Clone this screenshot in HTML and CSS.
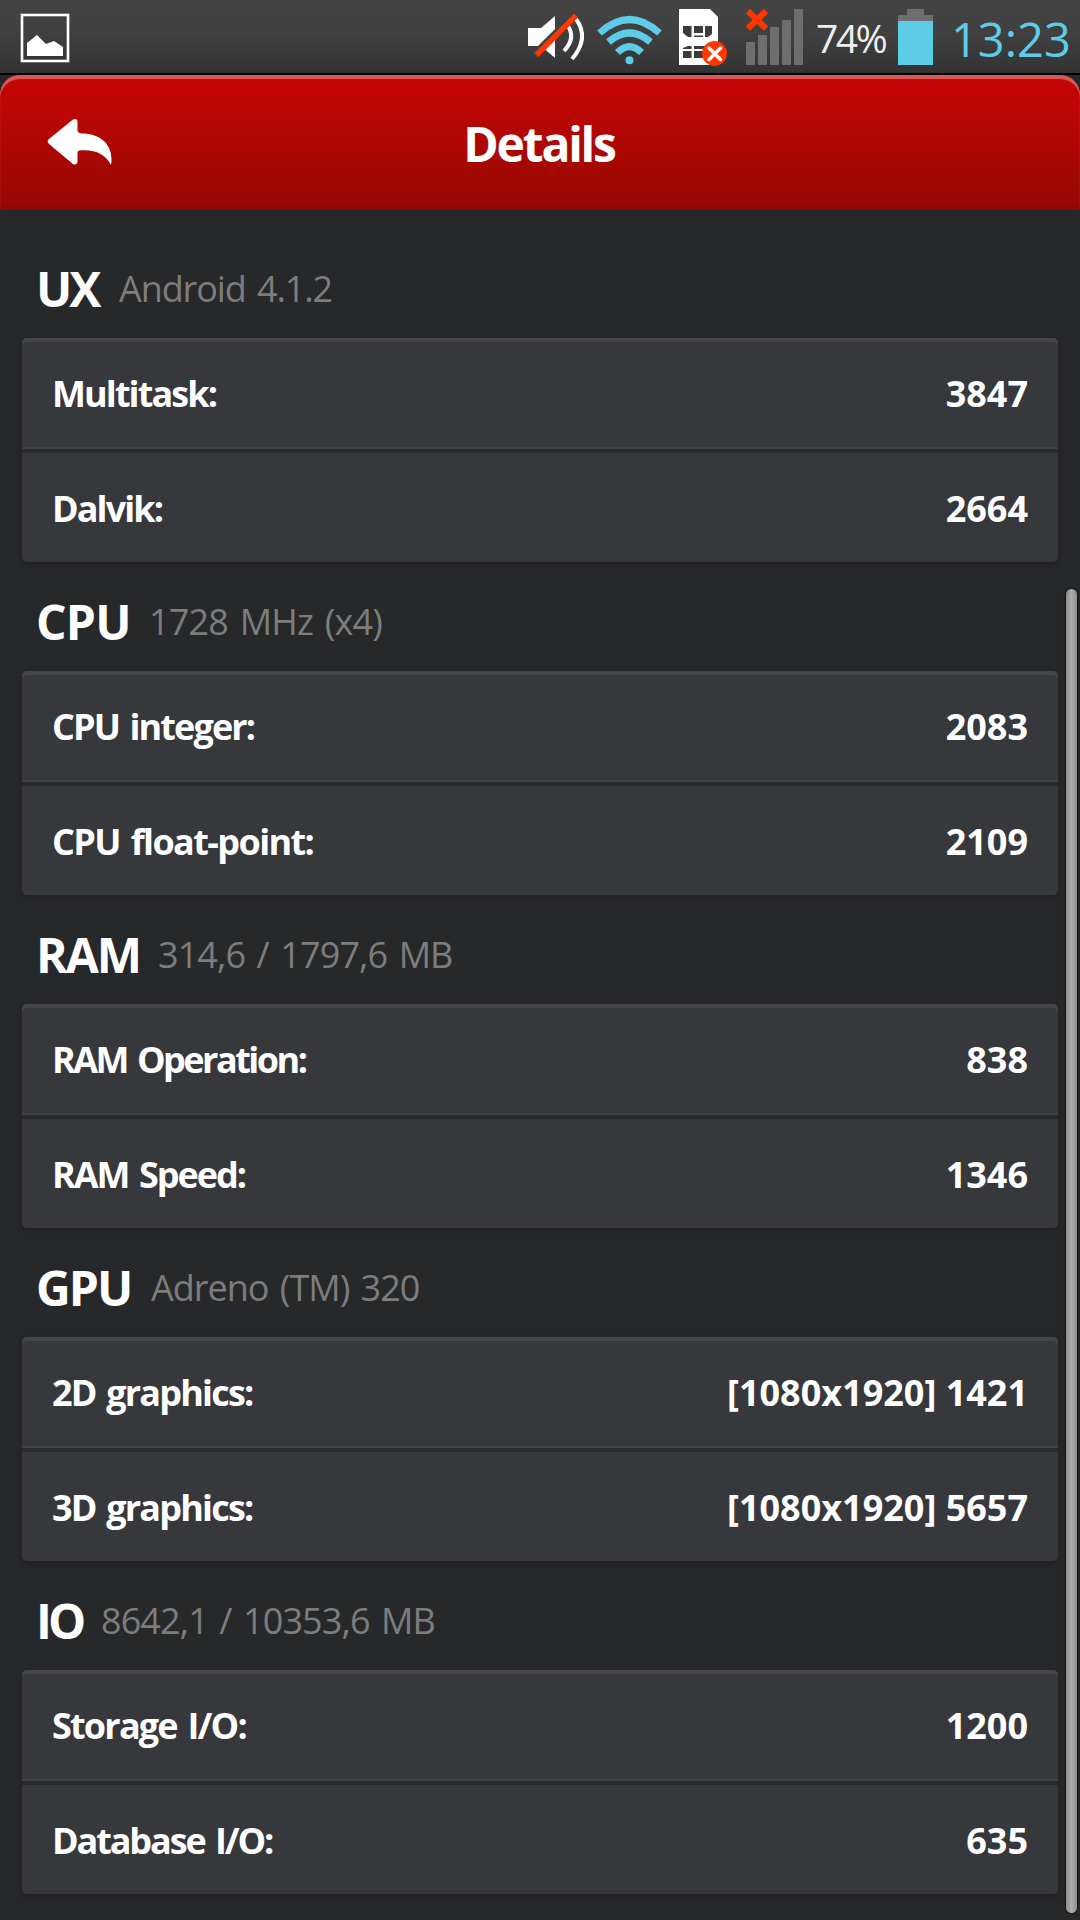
FILE: index.html
```html
<!DOCTYPE html>
<html lang="en">
<head>
    <meta charset="UTF-8">
    <meta name="viewport" content="width=device-width, initial-scale=1.0">
    <title>Details</title>
    <link rel="stylesheet" href="styles.css">
</head>
<body>
    <div class="status-bar">
        <svg class="icon-picture" width="50" height="50" viewBox="0 0 50 50">
            <rect x="2" y="2" width="46" height="46" fill="none" stroke="#fff" stroke-width="2.6"/>
            <path d="M7 43V30l10-8 9 9 8-3 9 6v9z" fill="#fff"/>
        </svg>
        <div class="status-icons">
            <svg width="300" height="73" viewBox="0 0 300 73">
                <!-- muted speaker -->
                <path d="M18 28h13l14-12v42L31 46H18z" fill="#fff"/>
                <path d="M58 26q8 12-4 25M66 19q14 19-4 40" fill="none" stroke="#fff" stroke-width="4"/>
                <path d="M24 55L64 15" stroke="#414141" stroke-width="7"/>
                <path d="M26.500 55L66 15.500" stroke="#ff3600" stroke-width="5.500"/>
                <!-- wifi -->
                <g fill="none" stroke="#5dcde7" stroke-width="7">
                    <path d="M89.500 33Q119.500 6 149.500 33"/>
                    <path d="M98.500 42Q119.500 24 140.500 42"/>
                    <path d="M107.500 52.500Q119.500 40.500 131.500 52.500"/>
                </g>
                <circle cx="119.500" cy="60.300" r="4" fill="#5dcde7"/>
                <!-- sim card -->
                <path d="M169 9h31l8 8v48h-39z" fill="#fff"/>
                <path d="M173 26h8.500v11h-3.500l-5-4zM184 26h9v7h-9zM195 26h7v8l-4 3h-3zM184 35.500h9V37h-9zM173 51h8.500v7H173zM173 48l5-2h3.500v3H173zM184 46h11l6 3h-17zM184 51h14v7h-14z" fill="#3b3b3b"/>
                <circle cx="204.500" cy="53.500" r="12.500" fill="#ff3600"/>
                <path d="M199 48l11.500 11.500M210.500 48L199 59.500" stroke="#fff" stroke-width="3.500" stroke-linecap="round"/>
                <!-- signal -->
                <path d="M236 42h9v23h-9zM248 35h9v30h-9zM260 27h9v38h-9zM272 20h9v45h-9zM284 9h9v56h-9z" fill="#6e6e6e"/>
                <path d="M238 11l18 17.500M256 11l-18 17.500" stroke="#ff3600" stroke-width="6"/>
            </svg>
            <span class="battery-text">74%</span>
            <svg class="icon-battery" width="35" height="56" viewBox="0 0 35 56">
                <path d="M0 6h9V0h17v6h9v6H0z" fill="#6e6e6e"/>
                <path d="M0 12h35v44H0z" fill="#5dcde7"/>
            </svg>
            <span class="clock">13:23</span>
        </div>
    </div>

    <div class="header">
        <svg class="icon-back" width="66" height="48" viewBox="0 0 66 48">
            <path d="M1 24.500Q0 23 2 21L26 1.500Q30 0 30.500 3V13q1 2 4 2.500C56 15.500 67 29 64 47 58 36 48 31 32 32.500q-1.500.500-1.500 2.500V44q-.500 3-4 2.500L2 26z" fill="#fff"/>
        </svg>
        <h1>Details</h1>
    </div>

    <div class="content">
        <div class="section">
            <div class="section-title"><h2 class="t-ux">UX</h2><span class="s-ux">Android 4.1.2</span></div>
            <div class="card">
                <div class="row"><span class="r-mul">Multitask:</span><b>3847</b></div>
                <div class="row"><span class="r-dal">Dalvik:</span><b>2664</b></div>
            </div>
        </div>
        <div class="section">
            <div class="section-title"><h2 class="t-cpu">CPU</h2><span class="s-cpu">1728 MHz (x4)</span></div>
            <div class="card">
                <div class="row"><span class="r-int">CPU integer:</span><b>2083</b></div>
                <div class="row"><span class="r-flo">CPU float-point:</span><b>2109</b></div>
            </div>
        </div>
        <div class="section">
            <div class="section-title"><h2 class="t-ram">RAM</h2><span class="s-ram">314,6 / 1797,6 MB</span></div>
            <div class="card">
                <div class="row"><span class="r-ope">RAM Operation:</span><b>838</b></div>
                <div class="row"><span class="r-spe">RAM Speed:</span><b>1346</b></div>
            </div>
        </div>
        <div class="section">
            <div class="section-title"><h2 class="t-gpu">GPU</h2><span class="s-gpu">Adreno (TM) 320</span></div>
            <div class="card">
                <div class="row"><span class="r-2d">2D graphics:</span><b>[1080x1920] 1421</b></div>
                <div class="row"><span class="r-2d">3D graphics:</span><b>[1080x1920] 5657</b></div>
            </div>
        </div>
        <div class="section">
            <div class="section-title"><h2 class="t-io">IO</h2><span class="s-io">8642,1 / 10353,6 MB</span></div>
            <div class="card">
                <div class="row"><span class="r-sto">Storage I/O:</span><b>1200</b></div>
                <div class="row"><span class="r-dat">Database I/O:</span><b>635</b></div>
            </div>
        </div>
        <div class="scrollbar"></div>
    </div>
</body>
</html>
```
FILE: styles.css
```css
* { box-sizing: border-box; margin: 0; padding: 0; }
body { width: 1080px; height: 1920px; overflow: hidden; background: #27282a; color: #fff; font-family: 'Open Sans', 'Noto Sans', sans-serif; }
svg { display: block; flex: none; }

.status-bar { height: 75px; display: flex; justify-content: space-between; background: linear-gradient(#444, #404040 45%, #333); border-bottom: 2px solid #000; }
.icon-picture { margin: 13px 0 0 20px; }
.status-icons { display: flex; align-items: flex-start; width: 570px; }
.battery-text { width: 71px; margin-left: 6px; margin-right: 11px; font-size: 39px; line-height: 76px; letter-spacing: -2.6px; color: #eee; white-space: nowrap; }
.icon-battery { margin-top: 9px; }
.clock { margin-left: 18px; font-size: 47px; line-height: 78px; color: #5dcde7; letter-spacing: 0; }

.header { height: 135px; position: relative; display: flex; align-items: center; justify-content: center; background: linear-gradient(#c80505, #970803 97%, #840803); border-radius: 20px 20px 0 0; box-shadow: inset 0 4px 1px #d65a5a; }
.header h1 { font-size: 48px; font-weight: 680; line-height: 64px; letter-spacing: -2.2px; padding: 2px 2px 0 0; }
.icon-back { position: absolute; left: 47px; top: 43px; }

.content { position: relative; height: 1710px; padding: 19px 22px 0; }
.section { height: 333px; }
.section-title { height: 109px; padding: 28px 14px 0; display: flex; line-height: 64px; white-space: nowrap; }
.section-title h2 { flex: none; font-size: 48px; font-weight: 680; }
.section-title span { font-size: 36px; font-weight: 400; line-height: 63px; color: #7d7d7d; word-spacing: 3px; }
.t-ux { width: 83px; letter-spacing: -3px; }
.t-cpu { width: 113px; letter-spacing: -0.8px; }
.t-ram { width: 122px; letter-spacing: -2px; }
.t-gpu { width: 115px; letter-spacing: -2px; }
.t-io { width: 65px; letter-spacing: -4px; }
.s-ux { letter-spacing: -1.1px; }
.s-cpu { letter-spacing: -0.8px; }
.s-ram { letter-spacing: -0.9px; }
.s-gpu { letter-spacing: -1px; }
.s-io { letter-spacing: -0.9px; }

.card { height: 224px; width: 1036px; background: #37383c; border-radius: 5px; box-shadow: inset 0 4px 1px #454649, 0 2px 4px #202123; }
.row { height: 109px; padding: 0 30px; display: flex; justify-content: space-between; font-size: 36px; font-weight: 680; line-height: 111px; white-space: nowrap; }
.row:first-child { height: 115px; line-height: 112px; border-bottom: 4px solid #292a2c; box-shadow: inset 0 -2px 0 #414246; }
.row span { word-spacing: 3px; }
.row b { font-weight: 680; }
.r-mul { letter-spacing: -1.9px; }
.r-dal { letter-spacing: -1.9px; }
.r-int { letter-spacing: -1.9px; }
.r-flo { letter-spacing: -1.6px; }
.r-ope { letter-spacing: -2.5px; }
.r-spe { letter-spacing: -2px; }
.r-2d { letter-spacing: -1.8px; }
.r-sto { letter-spacing: -1.8px; }
.r-dat { letter-spacing: -2.1px; }

.scrollbar { position: absolute; left: 1066px; top: 379px; width: 11px; height: 1324px; border-radius: 6px; background: linear-gradient(90deg, #8b8b8b, #adadad 50%, #8e8e8e); box-shadow: 0 0 2px 1px #151515; }
```
